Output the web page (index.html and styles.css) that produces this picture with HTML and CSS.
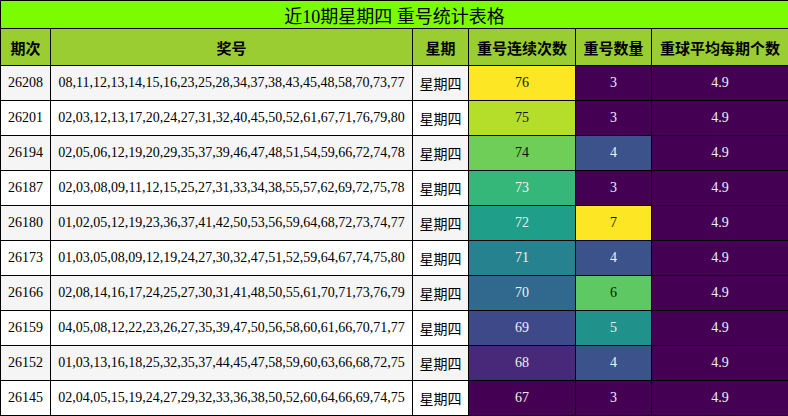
FILE: index.html
```html
<!DOCTYPE html>
<html lang="zh">
<head>
<meta charset="utf-8">
<link rel="stylesheet" href="styles.css">
</head>
<body>
<table class="stats">
  <colgroup>
    <col class="c1"><col class="c2"><col class="c3"><col class="c4"><col class="c5"><col class="c6">
  </colgroup>
  <thead>
    <tr class="title-row"><th colspan="6" class="title">近10期星期四 重号统计表格</th></tr>
    <tr class="head-row">
      <th>期次</th><th>奖号</th><th>星期</th><th>重号连续次数</th><th>重号数量</th><th>重球平均每期个数</th>
    </tr>
  </thead>
  <tbody>
    <tr class="odd"><td>26208</td><td>08,11,12,13,14,15,16,23,25,28,34,37,38,43,45,48,58,70,73,77</td><td class="cn">星期四</td><td class="v10 dk">76</td><td class="v0">3</td><td class="v0">4.9</td></tr>
    <tr><td>26201</td><td>02,03,12,13,17,20,24,27,31,32,40,45,50,52,61,67,71,76,79,80</td><td class="cn">星期四</td><td class="v9 dk">75</td><td class="v0">3</td><td class="v0">4.9</td></tr>
    <tr class="odd"><td>26194</td><td>02,05,06,12,19,20,29,35,37,39,46,47,48,51,54,59,66,72,74,78</td><td class="cn">星期四</td><td class="v8 dk">74</td><td class="q4">4</td><td class="v0">4.9</td></tr>
    <tr><td>26187</td><td>02,03,08,09,11,12,15,25,27,31,33,34,38,55,57,62,69,72,75,78</td><td class="cn">星期四</td><td class="v7">73</td><td class="v0">3</td><td class="v0">4.9</td></tr>
    <tr class="odd"><td>26180</td><td>01,02,05,12,19,23,36,37,41,42,50,53,56,59,64,68,72,73,74,77</td><td class="cn">星期四</td><td class="v6">72</td><td class="v10 dk">7</td><td class="v0">4.9</td></tr>
    <tr><td>26173</td><td>01,03,05,08,09,12,19,24,27,30,32,47,51,52,59,64,67,74,75,80</td><td class="cn">星期四</td><td class="v5">71</td><td class="q4">4</td><td class="v0">4.9</td></tr>
    <tr class="odd"><td>26166</td><td>02,08,14,16,17,24,25,27,30,31,41,48,50,55,61,70,71,73,76,79</td><td class="cn">星期四</td><td class="v4">70</td><td class="q6 dk">6</td><td class="v0">4.9</td></tr>
    <tr><td>26159</td><td>04,05,08,12,22,23,26,27,35,39,47,50,56,58,60,61,66,70,71,77</td><td class="cn">星期四</td><td class="v3">69</td><td class="q5">5</td><td class="v0">4.9</td></tr>
    <tr class="odd"><td>26152</td><td>01,03,13,16,18,25,32,35,37,44,45,47,58,59,60,63,66,68,72,75</td><td class="cn">星期四</td><td class="v2">68</td><td class="q4">4</td><td class="v0">4.9</td></tr>
    <tr><td>26145</td><td>02,04,05,15,19,24,27,29,32,33,36,38,50,52,60,64,66,69,74,75</td><td class="cn">星期四</td><td class="v0">67</td><td class="v0">3</td><td class="v0">4.9</td></tr>
  </tbody>
</table>
</body>
</html>
```
FILE: styles.css
```css
html, body {
  margin: 0;
  padding: 0;
  background: #ffffff;
}
.stats {
  width: 788px;
  table-layout: fixed;
  border-collapse: collapse;
  font-family: "Liberation Serif", "Noto Sans CJK SC", serif;
  font-size: 14px;
  color: #000;
}
.c1 { width: 50px; }
.c2 { width: 362px; }
.c3 { width: 56px; }
.c4 { width: 107px; }
.c5 { width: 76px; }
.c6 { width: 137px; }
.stats th, .stats td {
  border: 1px solid #000;
  padding: 0;
  text-align: center;
  vertical-align: middle;
  white-space: nowrap;
  overflow: hidden;
}
.title-row { height: 28px; }
.title {
  background: #7cfc00;
  font-size: 18px;
  font-weight: normal;
}
.head-row { height: 37px; }
.head-row th {
  background: #9acd32;
  font-family: "Noto Sans CJK SC", sans-serif;
  font-size: 15px;
  font-weight: bold;
}
.stats tbody tr { height: 35px; background: #ffffff; }
.stats tbody tr.odd { background: #f5f5f5; }
.cn { font-family: "Noto Sans CJK SC", sans-serif; }
.stats td.v0, .stats td.v2, .stats td.v3, .stats td.v4, .stats td.v5, .stats td.v6, .stats td.v7,
.stats td.q4, .stats td.q5 { color: #f1f1f1; }
.stats td.dk { color: #111; }
.v10 { background: #fde725; }
.v9 { background: #b5de2b; }
.v8 { background: #6ece58; }
.v7 { background: #35b779; }
.v6 { background: #1f9e89; }
.v5 { background: #26828e; }
.v4 { background: #31688e; }
.v3 { background: #3e4989; }
.v2 { background: #482878; }
.v0 { background: #440154; }
.q4 { background: #3b528b; }
.q5 { background: #21918c; }
.q6 { background: #5ec962; }
```
